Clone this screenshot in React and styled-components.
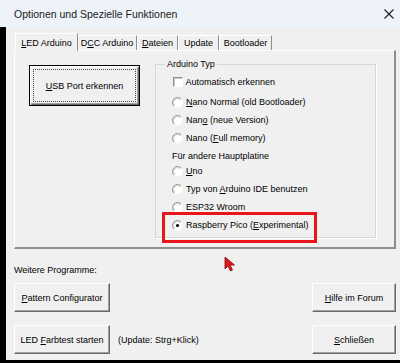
import styled, { createGlobalStyle } from "styled-components";

const Global = createGlobalStyle`
  html, body { margin: 0; padding: 0; background: #f0f0f0; }
  body { font-family: "Liberation Sans", Arial, sans-serif; }
`;

const Ul = styled.span`
  text-decoration: underline;
  text-underline-offset: 1px;
`;

// renders text with the access key underlined
const Label = ({ text, at }) => {
  if (at === undefined || at < 0) return <span>{text}</span>;
  return <span>{text.slice(0, at)}<Ul>{text[at]}</Ul>{text.slice(at + 1)}</span>;
};

export default function App() {
  const tabs = [
    { text: "LED Arduino", at: 0, w: 63, active: true },
    { text: "DCC Arduino", at: 1, w: 60 },
    { text: "Dateien", at: 0, w: 41 },
    { text: "Update", w: 41 },
    { text: "Bootloader", w: 53 },
  ];
  const nanos = [
    { text: "Nano Normal (old Bootloader)", at: 0 },
    { text: "Nano (neue Version)", at: 3 },
    { text: "Nano (Full memory)", at: 6 },
  ];
  const others = [
    { text: "Uno", at: 0 },
    { text: "Typ von Arduino IDE benutzen", at: 8 },
    { text: "ESP32 Wroom" },
    { text: "Raspberry Pico (Experimental)", at: 16, checked: true },
  ];

  return <Window>
    <Global />
    <TitleBar>
      <Title>Optionen und Spezielle Funktionen</Title>
      <svg width="10" height="10" viewBox="0 0 10 10">
        <path d="M0.5 0.5 L9.5 9.5 M9.5 0.5 L0.5 9.5" stroke="#1b1b1b" strokeWidth="1.1" />
      </svg>
    </TitleBar>
    <Body>
      <Tabs>
        {tabs.map(t => <Tab key={t.text} $w={t.w} $active={t.active}>
          <Label text={t.text} at={t.at} />
        </Tab>)}
      </Tabs>
      <Panel>
        <UsbButton><Focus><Label text="USB Port erkennen" at={0} /></Focus></UsbButton>
        <Group>
          <Legend>Arduino Typ</Legend>
          <Row $first>
            <CheckBox />
            <span>Automatisch erkennen</span>
          </Row>
          {nanos.map(r => <Row key={r.text}>
            <Radio />
            <Label text={r.text} at={r.at} />
          </Row>)}
          <SubHead>Für andere Hauptplatine</SubHead>
          {others.map(r => <Row key={r.text}>
            <Radio checked={r.checked} />
            <Label text={r.text} at={r.at} />
          </Row>)}
        </Group>
      </Panel>
      <Section>Weitere Programme:</Section>
      <ButtonRow>
        <Button $w={96}><Label text="Pattern Configurator" at={0} /></Button>
        <Button $w={84}><Label text="Hilfe im Forum" at={0} /></Button>
      </ButtonRow>
      <ButtonRow $gap>
        <Button $w={96}><Label text="LED Farbtest starten" at={4} /></Button>
        <Hint>(Update: Strg+Klick)</Hint>
        <Button $w={84}><Label text="Schließen" at={0} /></Button>
      </ButtonRow>
    </Body>
    <Highlight />
    <Cursor width="12" height="16" viewBox="0 0 12 16">
      <path d="M1 1 L1 13 L4 10 L6.5 15 L8.5 14 L6 9 L10.5 9 Z" fill="#e5161b" stroke="#7a0a0a" strokeWidth="0.8" />
    </Cursor>
  </Window>
}

const Radio = ({ checked }) => <RadioIcon width="11" height="11" viewBox="0 0 11 11">
  <circle cx="5.5" cy="5.5" r="5" fill="#fff" />
  <path d="M1.96 9.04 A5 5 0 0 1 9.04 1.96" fill="none" stroke="#8f8f8f" strokeWidth="1" />
  <path d="M2.67 8.33 A4 4 0 0 1 8.33 2.67" fill="none" stroke="#c8c8c8" strokeWidth="1" />
  {checked && <circle cx="5.5" cy="5.5" r="1.6" fill="#000" />}
</RadioIcon>;

const Window = styled.div`
  position: relative;
  width: 400px;
  height: 363px;
  overflow: hidden;
  background: #f0f0f0;
  font-size: 9px;
  color: #000;
`

const TitleBar = styled.div`
  height: 27px;
  background: #eef3f9;
  display: flex;
  align-items: center;
  justify-content: space-between;
  padding: 0 6px 0 14px;
  box-sizing: border-box;
`

const Title = styled.div`
  font-size: 10.5px;
  color: #1a1a1a;
`

const Body = styled.div`
  height: 336px;
  box-sizing: border-box;
  border-left: 6px solid #000;
  border-bottom: 3px solid #000;
  padding: 6px 4px 0 8px;
  display: flex;
  flex-direction: column;
`

const Tabs = styled.div`
  display: flex;
  align-items: flex-end;
  height: 17px;
  padding-left: 1px;
`

const Tab = styled.div`
  width: ${p => p.$w}px;
  height: ${p => p.$active ? 18 : 15}px;
  box-sizing: border-box;
  display: flex;
  align-items: center;
  justify-content: center;
  border-top: 1px solid #fff;
  border-left: 1px solid #fff;
  border-right: 1px solid #8e8e8e;
  background: #f0f0f0;
  position: relative;
  z-index: ${p => p.$active ? 2 : 1};
  margin-bottom: ${p => p.$active ? -1 : 0}px;
  margin-right: ${p => p.$active ? -1 : 0}px;
`

const Panel = styled.div`
  height: 199px;
  box-sizing: border-box;
  border-top: 1px solid #fff;
  border-left: 1px solid #fff;
  border-right: 2px solid #8e8e8e;
  border-bottom: 2px solid #8e8e8e;
  display: flex;
  align-items: flex-start;
  padding: 7px 0 0 14px;
  gap: 15px;
`

const UsbButton = styled.div`
  margin-top: 7px;
  width: 111px;
  height: 41px;
  box-sizing: border-box;
  border: 1px solid #000;
  box-shadow: inset 1px 1px #fff, inset -1px -1px #696969, inset -2px -2px #a0a0a0;
  padding: 3px;
  display: flex;
`

const Focus = styled.div`
  flex: 1;
  border: 1px dotted #444;
  display: flex;
  align-items: center;
  justify-content: center;
`

const Group = styled.fieldset`
  margin: 0;
  width: 221px;
  height: 180px;
  box-sizing: border-box;
  border: 1px solid #d6d6d6;
  box-shadow: 1px 1px 0 #fff;
  padding: 3px 0 0 16px;
`

const Legend = styled.legend`
  margin-left: -7px;
  padding: 0 2px;
  line-height: 12px;
`

const Row = styled.div`
  display: flex;
  align-items: center;
  height: 18px;
  gap: 3px;
  margin-bottom: ${p => p.$first ? 2 : 0}px;
`

const CheckBox = styled.div`
  width: 10px;
  height: 10px;
  box-sizing: border-box;
  background: #fff;
  border-top: 1px solid #8f8f8f;
  border-left: 1px solid #8f8f8f;
  border-right: 1px solid #fff;
  border-bottom: 1px solid #fff;
  box-shadow: inset 1px 1px #c8c8c8;
  margin-left: 0.5px;
`

const RadioIcon = styled.svg`
  display: block;
  flex: none;
`

const SubHead = styled.div`
  height: 12px;
  line-height: 12px;
  margin-top: 3px;
`

const Section = styled.div`
  margin-top: 15px;
  line-height: 12px;
`

const ButtonRow = styled.div`
  display: flex;
  align-items: center;
  margin-top: ${p => p.$gap ? 13 : 7}px;
`

const Button = styled.div`
  width: ${p => p.$w}px;
  height: 29px;
  box-sizing: border-box;
  display: flex;
  align-items: center;
  justify-content: center;
  background: #f0f0f0;
  border-top: 1px solid #fff;
  border-left: 1px solid #fff;
  border-right: 1px solid #696969;
  border-bottom: 1px solid #696969;
  box-shadow: inset -1px -1px #a0a0a0;
  &:nth-last-child(1) { margin-left: auto; }
`

const Hint = styled.div`
  margin-left: 8px;
`

const Highlight = styled.div`
  position: absolute;
  left: 162px;
  top: 212px;
  width: 155px;
  height: 31px;
  box-sizing: border-box;
  border: 3px solid #e8151b;
`

const Cursor = styled.svg`
  position: absolute;
  left: 224px;
  top: 256px;
`
